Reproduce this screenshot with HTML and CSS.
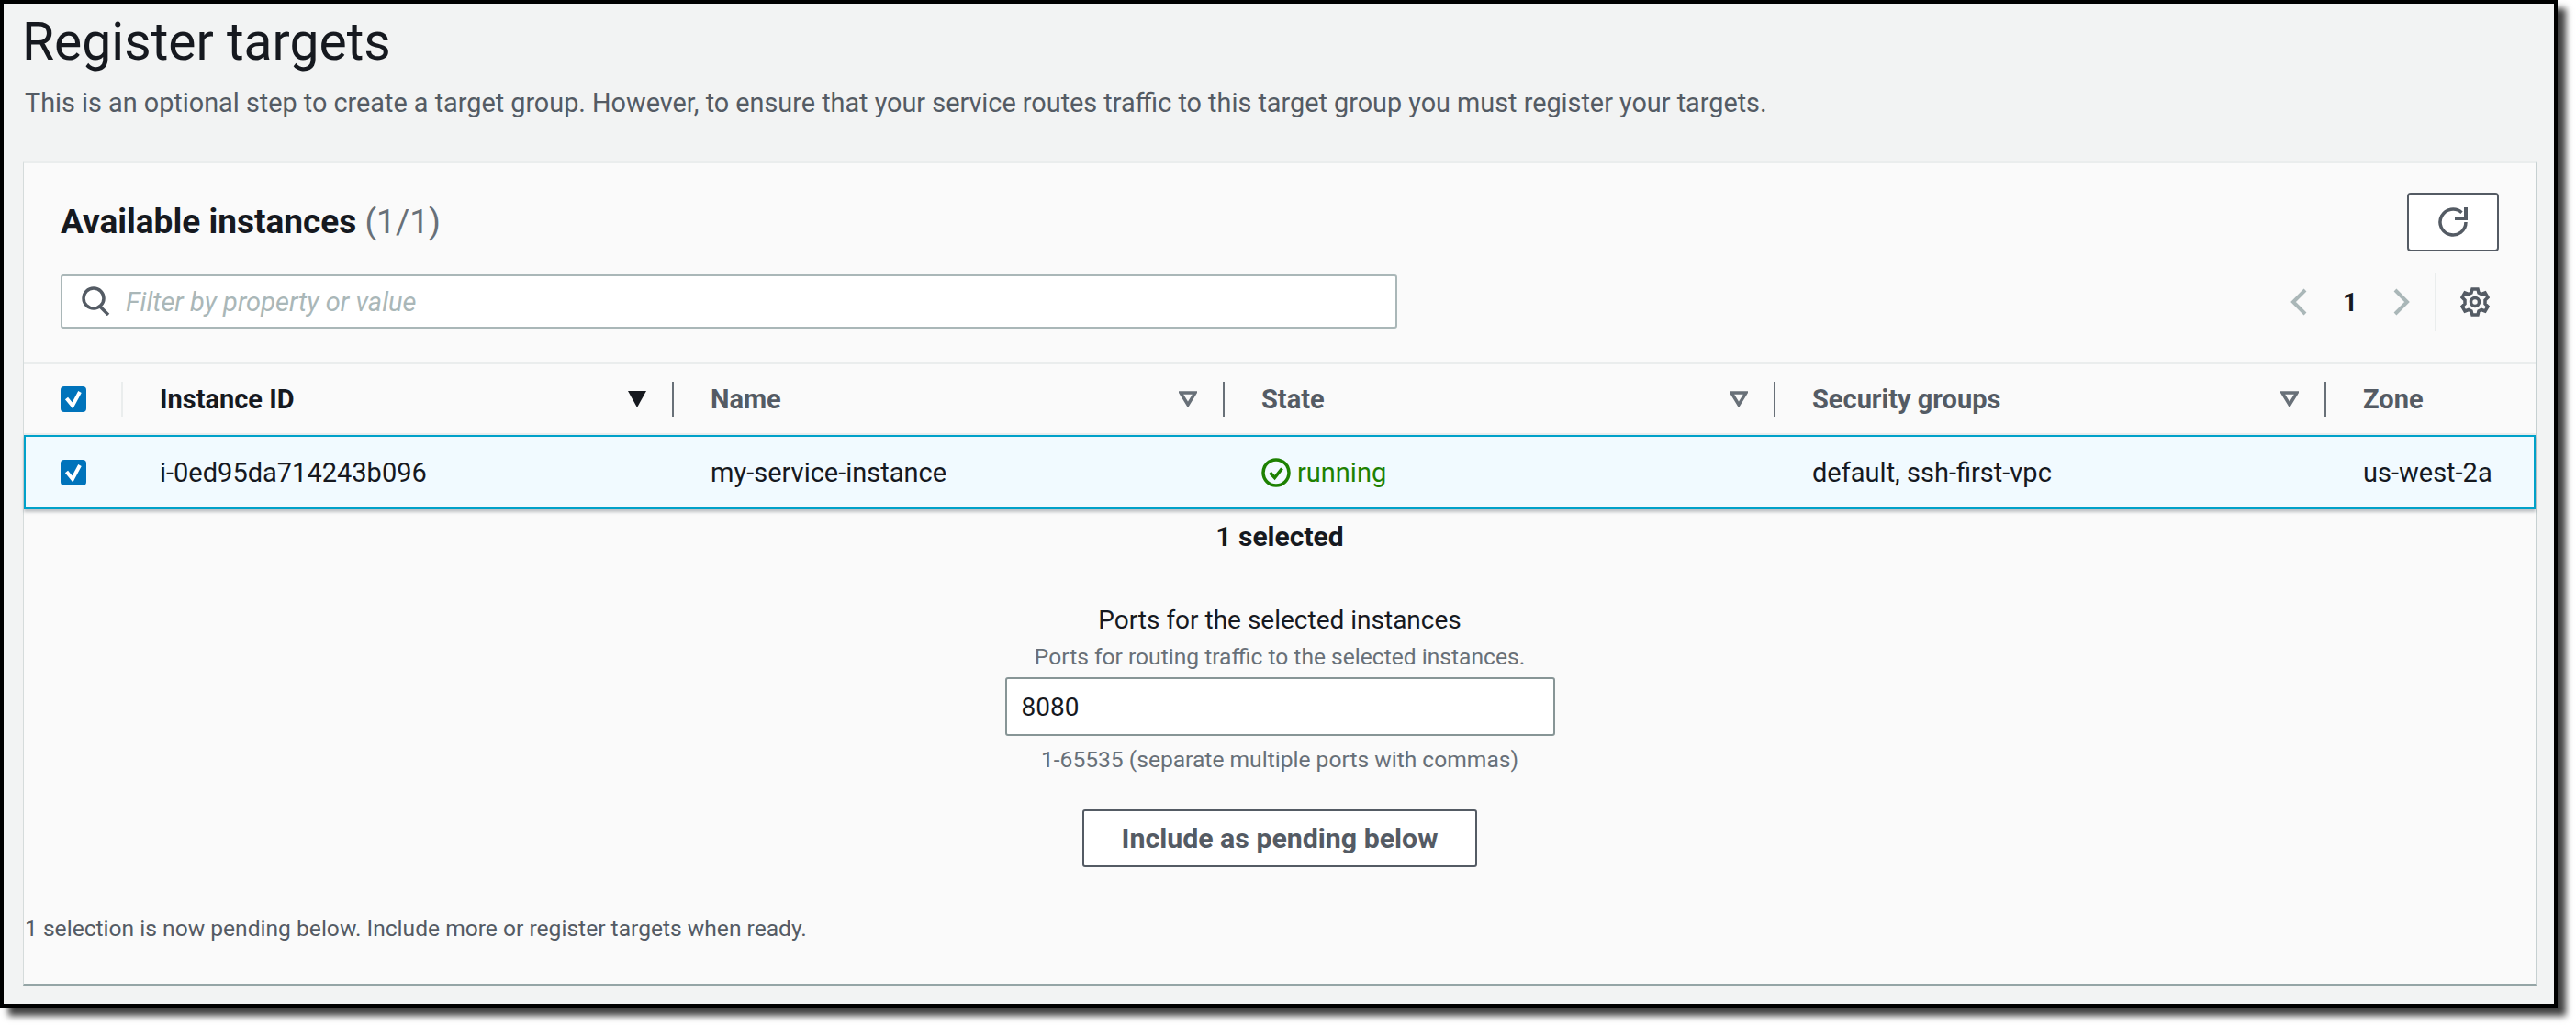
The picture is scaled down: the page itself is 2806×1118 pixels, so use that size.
FILE: index.html
```html
<!DOCTYPE html>
<html lang="en">
<head>
<meta charset="utf-8">
<title>Register targets</title>
<link rel="stylesheet" href="styles.css">
</head>
<body>
<main class="frame">
  <header class="page-head">
    <h1 class="page-title">Register targets</h1>
    <p class="page-sub">This is an optional step to create a target group. However, to ensure that your service routes traffic to this target group you must register your targets.</p>
  </header>
  <section class="card">
    <div class="card-title-row">
      <h2 class="card-title">Available instances <span class="count">(1/1)</span></h2>
      <button class="refresh" type="button" aria-label="Refresh">
        <svg class="icon-32" viewBox="0 0 32 32"><path class="ln" d="M30 16A14 14 0 1 1 25.5 5.700"/><path class="fl" d="M32 0v14H18v-4h10V0z"/></svg>
      </button>
    </div>
    <div class="tools-row">
      <div class="search">
        <svg class="search-icon" viewBox="0 0 32 32"><circle class="ln" cx="14" cy="13" r="11"/><path class="ln" d="M21 22l9 9"/></svg>
        <span class="placeholder">Filter by property or value</span>
      </div>
      <div class="pager">
        <svg class="chev" viewBox="0 0 18 30"><path d="M16 2L3 15l13 13"/></svg>
        <span class="page-num">1</span>
        <svg class="chev" viewBox="0 0 18 30"><path d="M2 2l13 13L2 28"/></svg>
        <span class="pager-sep"></span>
        <svg class="icon-32" viewBox="0 0 32 32"><path class="ln" d="M13 2h6l1 4 3 1.500 4-1.500 3 5-3 3v4l3 3-3 5-4-1.500-3 1.500-1 4h-6l-1-4-3-1.500-4 1.500-3-5 3-3v-4l-3-3 3-5 4 1.500 3-1.500z"/><circle class="ln" cx="16" cy="16" r="4.500"/></svg>
      </div>
    </div>
    <div class="table">
      <div class="row head">
        <div class="cell sel"><span class="check"><svg viewBox="0 0 28 28"><path d="M6.500 13l6.500 8 8-15"/></svg></span><span class="sep light"></span></div>
        <div class="cell"><span class="th active">Instance ID</span><svg class="sort" viewBox="0 0 20 18"><path class="solid" d="M0 0h20L10 18z"/></svg><span class="sep"></span></div>
        <div class="cell"><span class="th">Name</span><svg class="sort" viewBox="0 0 20 18"><path class="hollow" d="M2 2h16L10 15z"/></svg><span class="sep"></span></div>
        <div class="cell"><span class="th">State</span><svg class="sort" viewBox="0 0 20 18"><path class="hollow" d="M2 2h16L10 15z"/></svg><span class="sep"></span></div>
        <div class="cell"><span class="th">Security groups</span><svg class="sort" viewBox="0 0 20 18"><path class="hollow" d="M2 2h16L10 15z"/></svg><span class="sep"></span></div>
        <div class="cell"><span class="th">Zone</span></div>
      </div>
      <div class="row selected">
        <div class="cell sel"><span class="check"><svg viewBox="0 0 28 28"><path d="M6.500 13l6.500 8 8-15"/></svg></span></div>
        <div class="cell">i-0ed95da714243b096</div>
        <div class="cell">my-service-instance</div>
        <div class="cell running"><svg class="status" viewBox="0 0 32 32"><circle cx="16" cy="16" r="14"/><path d="M9.500 16l5 5.500 8-10"/></svg>running</div>
        <div class="cell">default, ssh-first-vpc</div>
        <div class="cell">us-west-2a</div>
      </div>
    </div>
    <div class="selected-count">1 selected</div>
    <div class="ports">
      <label class="ports-label" for="ports">Ports for the selected instances</label>
      <div class="ports-desc">Ports for routing traffic to the selected instances.</div>
      <input class="ports-input" id="ports" type="text" value="8080">
      <div class="ports-hint">1-65535 (separate multiple ports with commas)</div>
      <button class="include" type="button">Include as pending below</button>
    </div>
    <p class="pending">1 selection is now pending below. Include more or register targets when ready.</p>
  </section>
</main>
</body>
</html>
```

FILE: styles.css
```css
* { box-sizing: border-box; }
html, body { margin: 0; background: #fff; }
body { width: 2806px; height: 1118px; overflow: hidden; font-family: "Roboto", "Liberation Sans", sans-serif; color: #16191f; }

.frame {
  width: 2786px;
  height: 1098px;
  border: 4px solid #000;
  background: #f2f3f3;
  box-shadow: 9px 9px 7px rgba(0, 0, 0, .75);
  display: flex;
  flex-direction: column;
}

.page-head { padding: 12px 0 0 23px; height: 171px; }
.page-title { margin: 0 0 0 -3px; font-size: 57px; line-height: 60px; font-weight: 400; }
.page-sub { margin: 16px 0 0; font-size: 28.800px; line-height: 40px; color: #545b64; }

.card {
  margin: 0 19px 0 21px;
  height: 899px;
  background: #fafafa;
  border-top: 3px solid #eaeded;
  border-left: 1px solid #d5dbdb;
  border-right: 1px solid #c6d0d1;
  border-bottom: 2px solid #95a5a6;
}

.card-title-row { display: flex; justify-content: space-between; align-items: center; padding: 32px 40px 0; }
.card-title { margin: 0; font-size: 37px; line-height: 60px; font-weight: 700; }
.count { font-weight: 400; color: #687078; }

.refresh {
  width: 100px; height: 64px; padding: 0;
  display: flex; align-items: center; justify-content: center;
  background: #fff; border: 2px solid #545b64; border-radius: 4px;
}
.icon-32 { width: 32px; height: 32px; display: block; }
.ln { fill: none; stroke: #545b64; stroke-width: 3.500; }
.fl { fill: #545b64; }

.tools-row { display: flex; justify-content: space-between; align-items: center; padding: 25px 50px 0 40px; height: 83px; }
.search {
  width: 1456px; height: 59px; padding-left: 20px;
  display: flex; align-items: center; gap: 17px;
  background: #fff; border: 2px solid #aab7b8; border-radius: 3px;
}
.search-icon { width: 32px; height: 32px; }
.placeholder { font-size: 29px; font-style: italic; color: #aab7b8; padding-top: 2px; }

.pager { display: flex; align-items: center; margin-top: 2px; }
.chev { width: 18px; height: 30px; fill: none; stroke: #aab7b8; stroke-width: 4; }
.page-num { width: 94px; text-align: center; font-size: 28px; font-weight: 700; }
.pager-sep { width: 2px; height: 64px; margin: 0 26px 0 27px; background: #eaeded; }

.table { margin-top: 38px; border-top: 2px solid #eaeded; }
.row { display: grid; grid-template-columns: 108px 600px 600px 600px 600px 1fr; }
.head { height: 77px; border-bottom: 2px solid #eaeded; }
.selected {
  height: 81px; background: #f1faff;
  box-shadow: inset 0 0 0 2px #00a1c9, 0 3px 3px rgba(84, 91, 100, .35);
}
.cell { display: flex; align-items: center; padding-left: 40px; font-size: 29px; white-space: nowrap; }
.th { flex: 1; font-size: 29px; font-weight: 700; color: #545b64; }
.th.active { color: #16191f; }
.sort { width: 20px; height: 18px; margin-right: 28px; flex: none; }
.solid { fill: #16191f; }
.hollow { fill: none; stroke: #687078; stroke-width: 3.500; }
.sep { width: 2px; height: 38px; flex: none; background: #687078; }
.sep.light { background: #eaeded; margin-left: auto; }

.check { width: 28px; height: 28px; border-radius: 4px; background: #0073bb; display: block; flex: none; }
.check svg { display: block; width: 28px; height: 28px; fill: none; stroke: #fff; stroke-width: 4; }

.running { color: #1d8102; gap: 7px; }
.status { width: 32px; height: 32px; fill: none; stroke: #1d8102; stroke-width: 3.500; flex: none; }

.selected-count { margin-top: 10px; text-align: center; font-size: 30px; line-height: 40px; font-weight: 700; }
.ports { display: flex; flex-direction: column; align-items: center; }
.ports-label { margin-top: 53px; font-size: 28px; line-height: 36px; }
.ports-desc { margin-top: 4px; font-size: 24.600px; line-height: 36px; color: #687078; }
.ports-input {
  margin-top: 4px; width: 599px; height: 64px; padding: 0 16px;
  font: 400 28px "Roboto", "Liberation Sans", sans-serif; color: #16191f;
  background: #fff; border: 2px solid #879596; border-radius: 3px;
}
.ports-hint { margin-top: 8px; font-size: 24.600px; line-height: 36px; color: #687078; }
.include {
  margin-top: 36px; width: 430px; height: 63px; padding: 0;
  font: 700 30.300px "Roboto", "Liberation Sans", sans-serif; color: #545b64;
  background: #fff; border: 2px solid #545b64; border-radius: 3px;
}
.pending { margin: 49px 0 0 1px; font-size: 24.600px; line-height: 36px; color: #545b64; }
```
